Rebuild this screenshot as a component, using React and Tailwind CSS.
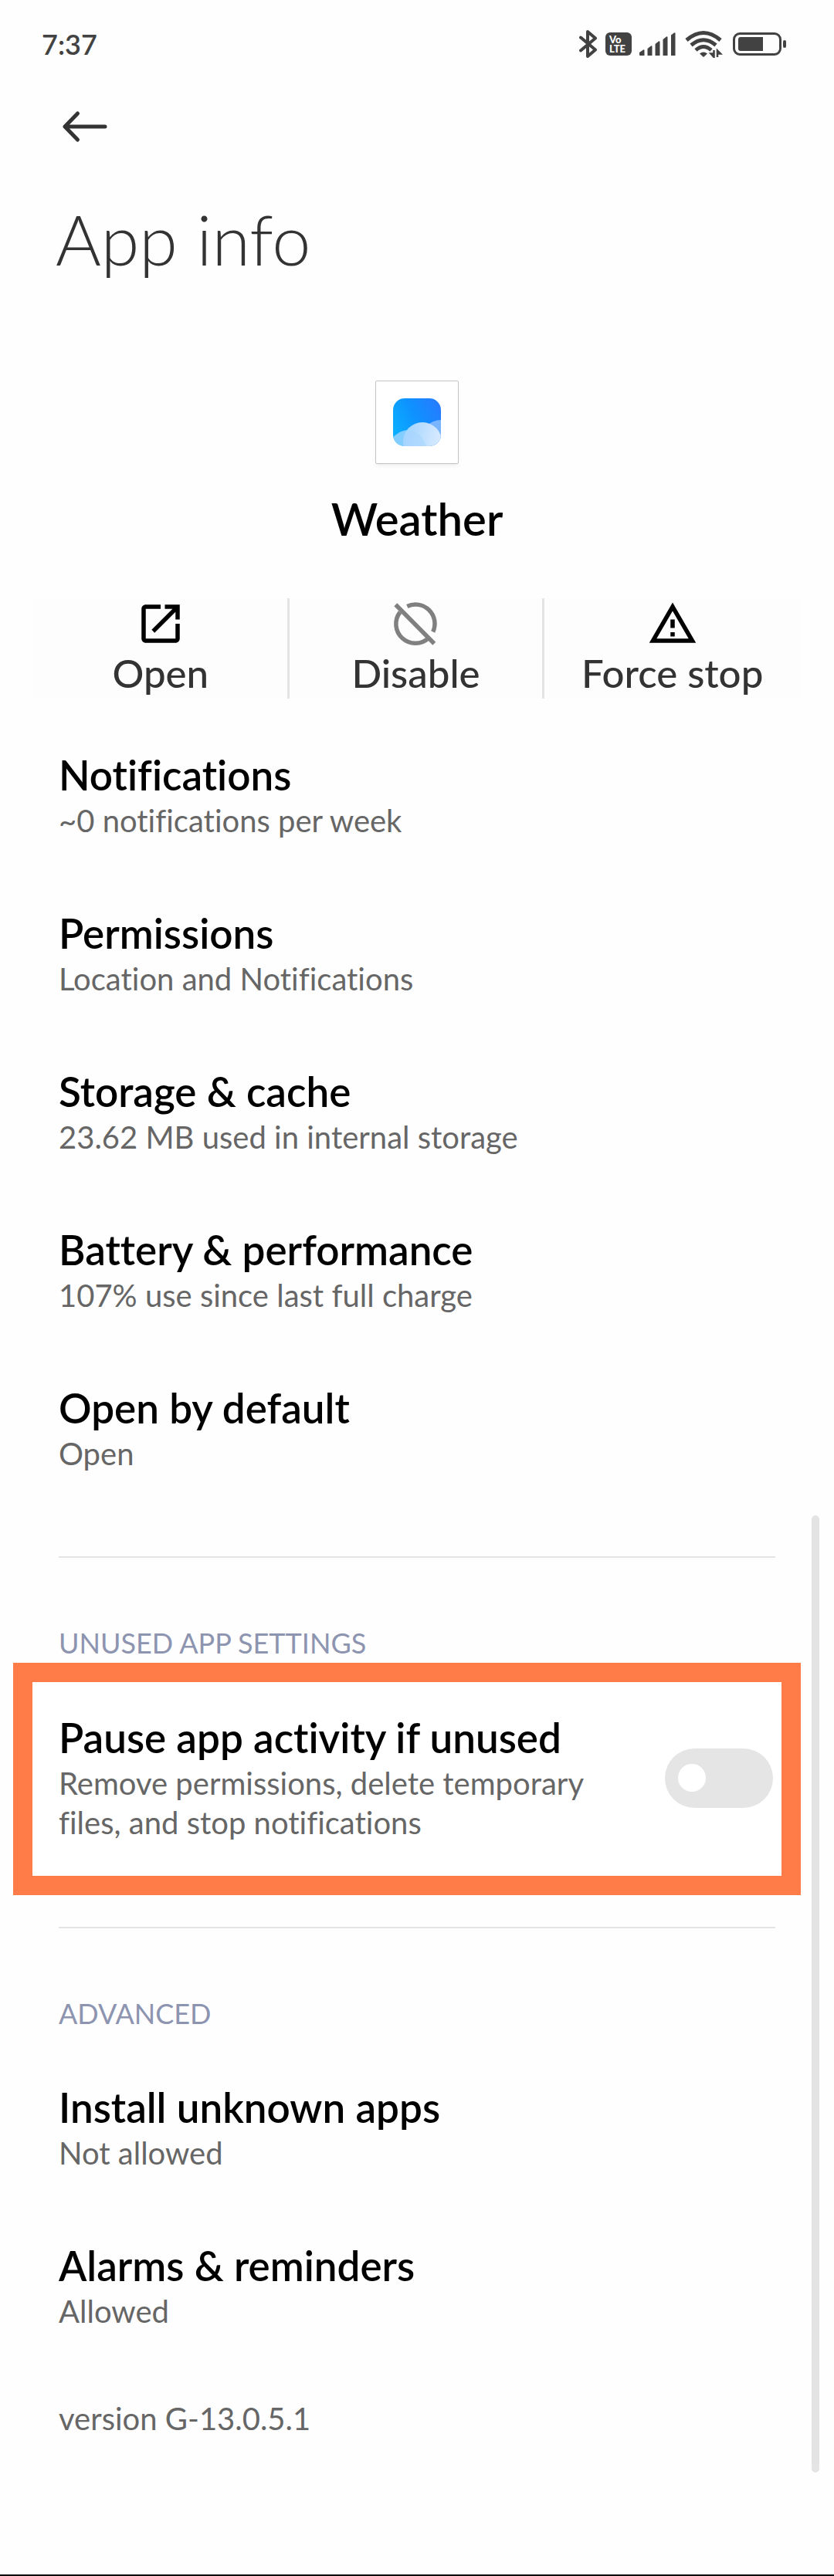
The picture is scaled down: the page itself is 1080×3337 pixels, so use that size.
import React, { useState } from "react";

const appSettings = [
    { title: "Notifications", summary: "~0 notifications per week" },
    { title: "Permissions", summary: "Location and Notifications" },
    { title: "Storage & cache", summary: "23.62 MB used in internal storage" },
    { title: "Battery & performance", summary: "107% use since last full charge" },
    { title: "Open by default", summary: "Open" },
];

const advancedSettings = [
    { title: "Install unknown apps", summary: "Not allowed" },
    { title: "Alarms & reminders", summary: "Allowed" },
];

const StatusBar = () => (
    <div className="flex h-[114px] items-center justify-between pl-[54px] pr-[62px] text-[#424242]">
        <time className="text-[36px] leading-10 font-semibold">7:37</time>
        <div className="flex items-center gap-2.5">
            <svg width="24" height="38" viewBox="0 0 24 38" fill="none" stroke="currentColor" strokeWidth="4" strokeLinecap="round" strokeLinejoin="round" aria-label="Bluetooth">
                <path d="M2 10.5L21 26.5L11 35V3l10 8.5L2 27.5" />
            </svg>
            <div className="flex h-[30px] w-[34px] flex-col justify-center rounded-[6px] bg-[#424242] pl-[5px] text-[13px] leading-[12px] font-black text-white">
                <span>Vo</span>
                <span>LTE</span>
            </div>
            <svg width="48" height="30" viewBox="0 0 48 30" fill="currentColor" aria-label="Signal">
                <path d="M0 26l5-3.5q1.5-.6 1.5 1V30H1q-1 0-1-1z" />
                <path d="M10.5 21l4.5-3.5q1.5-.6 1.5 1V30h-6z" />
                <path d="M20.5 15l4.5-3.5q1.5-.6 1.5 1V30h-6z" />
                <path d="M30.5 9l4.5-3.5q1.5-.6 1.5 1V30h-6z" />
                <path d="M41 3.5l4-3q1.5-.6 1.5 1V30H41z" />
            </svg>
            <svg width="53" height="36" viewBox="0 0 53 36" aria-label="Wi-Fi">
                <g fill="none" stroke="currentColor" strokeWidth="5">
                    <path d="M3 13Q25-6 47 13" />
                    <path d="M9 19.5Q25 6 41 19.5" />
                    <path d="M15 26Q25 17 35 26" />
                </g>
                <path d="M20 30.5q5-4 10 0L25 35z" fill="currentColor" />
                <path d="M38.5 26v9l-4-4.5h3M43 35v-8.5l4 4h-3" fill="none" stroke="currentColor" strokeWidth="2.5" />
            </svg>
            <svg width="69" height="30" viewBox="0 0 69 30" aria-label="Battery">
                <rect x="1.5" y="1.5" width="60" height="27" rx="7.5" fill="none" stroke="currentColor" strokeWidth="3" />
                <rect x="7" y="6" width="32" height="18" rx="3" fill="currentColor" />
                <path d="M36 6h3v18h-3z" fill="currentColor" />
                <rect x="65" y="10" width="4" height="10" rx="2" fill="currentColor" />
            </svg>
        </div>
    </div>
);

const WeatherIcon = () => (
    <svg width="62" height="62" viewBox="0 0 62 62">
        <defs>
            <linearGradient id="sky" x1="0" y1="0.7" x2="1" y2="0.2">
                <stop offset="0" stopColor="#0ab0ff" />
                <stop offset="0.5" stopColor="#0e92ff" />
                <stop offset="1" stopColor="#267cff" />
            </linearGradient>
            <linearGradient id="cloud" x1="0" y1="0.3" x2="1" y2="0.5">
                <stop offset="0" stopColor="#9fd3ff" />
                <stop offset="1" stopColor="#dcebff" />
            </linearGradient>
            <clipPath id="tile">
                <rect width="62" height="62" rx="15" />
            </clipPath>
        </defs>
        <g clipPath="url(#tile)">
            <rect width="62" height="62" fill="url(#sky)" />
            <circle cx="62" cy="54" r="26" fill="#79b4ff" />
            <circle cx="20" cy="66" r="25" fill="#84cdff" />
            <circle cx="38" cy="56" r="25" fill="url(#cloud)" />
            <path d="M13 56a25 25 0 0 1 3-12q18-8 29 22H13z" fill="#a9d6ff" opacity="0.6" />
        </g>
    </svg>
);

const OpenIcon = () => (
    <svg width="66" height="66" viewBox="0 0 24 24" fill="#000">
        <path d="M19 19H5V5h7V3H5c-1.11 0-2 .9-2 2v14c0 1.1.89 2 2 2h14c1.1 0 2-.9 2-2v-7h-2v7zM14 3v2h3.59l-9.83 9.83 1.41 1.41L19 6.41V10h2V3h-7z" />
    </svg>
);

const DisableIcon = () => (
    <svg width="66" height="66" viewBox="0 0 66 66" fill="none" stroke="#808080" strokeWidth="5.5">
        <path d="M22.3 10.4A25 25 0 0 1 55.7 43.5" />
        <path d="M13 18A25 25 0 0 0 50 51.4" />
        <path d="M7.3 8.3L57.3 58.7" />
    </svg>
);

const ForceStopIcon = () => (
    <svg width="66" height="66" viewBox="0 0 24 24" fill="#000">
        <path d="M12 5.99L19.53 19H4.47L12 5.99M12 2L1 21h22L12 2zm1 14h-2v2h2v-2zm0-6h-2v4h2v-4z" />
    </svg>
);

const Action = ({ icon, label }) => (
    <button className="flex flex-col items-center border-r-[3px] border-[#e4e4e4] pb-0.5 text-[51px] leading-[62px] font-medium text-[#333] last:border-r-0">
        {icon}
        {label}
    </button>
);

const SettingText = ({ title, summary }) => (
    <>
        <span className="block text-[53px] leading-[64px] font-semibold text-black">{title}</span>
        <span className="mt-0.5 block text-[40px] leading-[51px] text-[#666]">{summary}</span>
    </>
);

const SettingRow = ({ title, summary }) => (
    <button className="block w-full px-[76px] pt-[46px] pb-[42px] text-left">
        <SettingText title={title} summary={summary} />
    </button>
);

const SectionTitle = ({ children }) => (
    <h2 className="mt-[88px] px-[76px] text-[36px] leading-[44px] text-[#8d94b0]">{children}</h2>
);

const Divider = () => <hr className="mx-[76px] border-t-2 border-[#e4e4e4]" />;

const App = () => {
    const [paused, setPaused] = useState(false);
    return (
        <div className="relative min-h-screen border-b-2 border-black bg-[#fefefe] pb-[176px] font-['Lato',sans-serif] [font-variant-ligatures:none]">
            <StatusBar />
            <header className="pt-7">
                <button className="ml-[78px] block" aria-label="Back">
                    <svg width="62" height="44" viewBox="0 0 62 44" fill="none" stroke="#333" strokeWidth="5" strokeLinecap="round" strokeLinejoin="round">
                        <path d="M22.5 5L6 22l16.5 17M6 22h52" />
                    </svg>
                </button>
                <h1 className="mt-[71px] pl-[72px] text-[90px] leading-[104px] font-light text-[#333]">App info</h1>
            </header>
            <main>
                <section className="mt-[132px] flex flex-col items-center">
                    <div className="flex size-[108px] items-center justify-center rounded-[2px] border border-[#c4c4c4] bg-white shadow-md shadow-black/5">
                        <WeatherIcon />
                    </div>
                    <p className="mt-9 text-[58px] leading-[70px] font-semibold text-black">Weather</p>
                </section>
                <div className="mx-11 mt-[68px] grid grid-cols-3 bg-[#fdfdfd]">
                    <Action icon={<OpenIcon />} label="Open" />
                    <Action icon={<DisableIcon />} label="Disable" />
                    <Action icon={<ForceStopIcon />} label="Force stop" />
                </div>
                <section className="mt-[21px] mb-[65px]">
                    {appSettings.map((item) => (
                        <SettingRow key={item.title} title={item.title} summary={item.summary} />
                    ))}
                </section>
                <Divider />
                <SectionTitle>UNUSED APP SETTINGS</SectionTitle>
                <div className="mt-1 mr-[43px] mb-[41px] ml-[17px] flex items-center gap-[60px] border-[25px] border-[#ff7b47] bg-white pt-10 pr-[11px] pb-[43px] pl-[34px]">
                    <label htmlFor="pause" className="flex-1">
                        <SettingText
                            title="Pause app activity if unused"
                            summary="Remove permissions, delete temporary files, and stop notifications"
                        />
                    </label>
                    <input
                        id="pause"
                        type="checkbox"
                        role="switch"
                        checked={paused}
                        onChange={() => setPaused(!paused)}
                        className="flex h-[77px] w-[140px] shrink-0 appearance-none items-center rounded-full bg-[#e5e5e5] px-[17px] before:size-9 before:rounded-full before:bg-white checked:justify-end checked:bg-[#ff7b47]"
                    />
                </div>
                <Divider />
                <SectionTitle>ADVANCED</SectionTitle>
                <section className="mt-[22px]">
                    {advancedSettings.map((item) => (
                        <SettingRow key={item.title} title={item.title} summary={item.summary} />
                    ))}
                </section>
                <p className="mt-[46px] px-[76px] text-[40px] leading-[51px] text-[#666]">version G-13.0.5.1</p>
            </main>
            {/* scroll thumb */}
            <div className="absolute right-[19px] bottom-[132px] h-[1240px] w-2.5 rounded-full bg-[#e4e4e4]" />
        </div>
    );
};

export default App;
